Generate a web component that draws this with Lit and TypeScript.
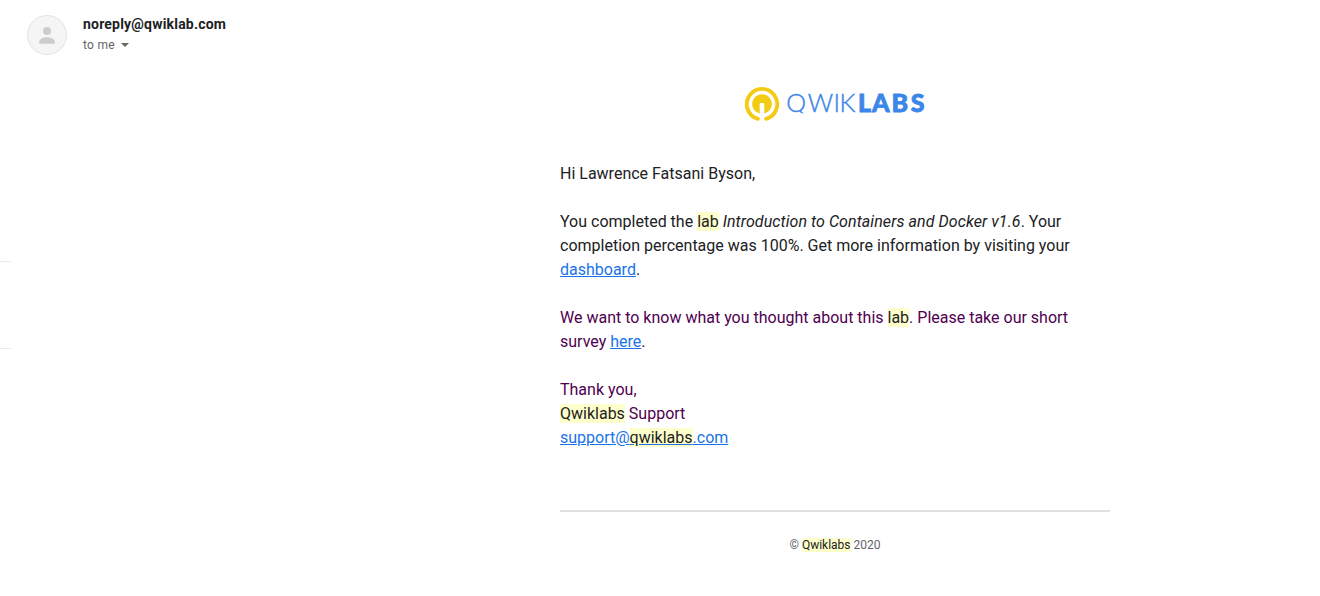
import { LitElement, html, css, svg } from "lit";
import { customElement } from "lit/decorators.js";

@customElement("sender-header")
class SenderHeader extends LitElement {
  static styles = css`
    :host { display: flex; align-items: flex-start; gap: 16px; padding: 15px 0 0 15px; height: 62px; box-sizing: border-box; }
    .avatar { width: 40px; height: 40px; flex: none; display: block; }
    .names { display: flex; flex-direction: column; }
    .email { font-size: 14px; font-weight: 700; line-height: 20px; letter-spacing: 0.2px; color: #202124; margin-top: -1px; }
    .to { display: flex; align-items: center; margin-top: 1px; font-size: 12px; line-height: 20px; letter-spacing: 0.3px; color: #5f6368; }
    .arrow { width: 8px; height: 4px; margin-left: 6px; }
  `;
  render() {
    return html`
      <svg class="avatar" viewBox="0 0 40 40">
        <circle cx="20" cy="20" r="19.5" fill="#f5f5f5" stroke="#e2e2e2" stroke-width="1"></circle>
        <circle cx="20" cy="16" r="4" fill="#ccc"></circle>
        <path d="M12.200 28.700v-2.200c0-2.700 5.100-4.200 7.800-4.200s7.800 1.500 7.800 4.200V28.700z" fill="#ccc"></path>
      </svg>
      <div class="names">
        <div class="email">noreply@qwiklab.com</div>
        <div class="to">to me
          <svg class="arrow" viewBox="0 0 8 4"><path d="M0 0h8L4 4z" fill="#666"></path></svg>
        </div>
      </div>
    `;
  }
}

@customElement("brand-logo")
class BrandLogo extends LitElement {
  static styles = css`
    :host { display: block; width: 184px; height: 36px; margin: 0 auto; }
    svg { display: block; }
    .word { font-family: Lato, sans-serif; font-size: 25px; fill: #3b86e8; }
    .thin { font-weight: 300; stroke: #3b86e8; stroke-width: 0.4px; }
    .heavy { font-weight: 900; stroke: #3b86e8; stroke-width: 0.8px; }
  `;
  render() {
    return html`<svg width="184" height="36" viewBox="0 0 184 36">
      ${svg`
        <clipPath id="short-tail"><rect x="40" y="0" width="144" height="27.200"></rect></clipPath>
        <path d="M14.900 32.800A15.200 15.200 0 1 1 23.100 32.800" fill="none" stroke="#f4cb13" stroke-width="3.800" stroke-linecap="round"></path>
        <path d="M16.700 27.500A9.800 9.800 0 1 1 21.300 27.500V17.800q0-.8-.8-.8h-3q-.8 0-.8.800z" fill="#f4cb13"></path>
        <text class="word thin" x="43.300 64.700 90.500 96.500" y="26" clip-path="url(#short-tail)">QWIK</text>
        <text class="word heavy" x="115 129 148.600 167.700" y="26">LABS</text>
      `}
    </svg>`;
  }
}

@customElement("message-body")
class MessageBody extends LitElement {
  static styles = css`
    :host { display: block; width: 550px; margin: 24px 0 0 548px; }
    .text { margin-top: 40px; font-size: 16px; line-height: 24px; color: #202124; }
    p { margin: 0 0 24px; }
    i { letter-spacing: 0.07px; }
    .quoted { color: #500050; }
    a { color: #1a73e8; text-decoration: underline; }
    mark { background: #ffc; color: #222; }
    .footer { margin-top: 60px; border-top: 2px solid #dfe1e5; padding-top: 24px; text-align: center; font-size: 12px; line-height: 18px; color: #5f6368; }
  `;
  render() {
    return html`
      <brand-logo></brand-logo>
      <div class="text">
        <p>Hi Lawrence Fatsani Byson,</p>
        <p>You completed the <mark>lab</mark> <i>Introduction to Containers and Docker v1.6</i>. Your<br>completion percentage was 100%. Get more information by visiting your<br><a>dashboard</a>.</p>
        <p class="quoted">We want to know what you thought about this <mark>lab</mark>. Please take our short<br>survey <a>here</a>.</p>
        <p class="quoted">Thank you,<br><mark>Qwiklabs</mark> Support<br><a>support@<mark>qwiklabs</mark>.com</a></p>
      </div>
      <div class="footer">© <mark>Qwiklabs</mark> 2020</div>
    `;
  }
}

@customElement("app-root")
class AppRoot extends LitElement {
  static styles = css`
    :host { display: grid; grid-template-columns: 12px 1fr; height: 596px; overflow: hidden; background: #fff; font-family: Roboto, sans-serif; }
    .edge { padding-top: 261px; width: 11px; }
    .divided { height: 88px; box-sizing: border-box; border: solid #ebebeb; border-width: 1px 0; }
  `;
  render() {
    return html`
      <div class="edge"><div class="divided"></div></div>
      <main>
        <sender-header></sender-header>
        <message-body></message-body>
      </main>
    `;
  }
}
